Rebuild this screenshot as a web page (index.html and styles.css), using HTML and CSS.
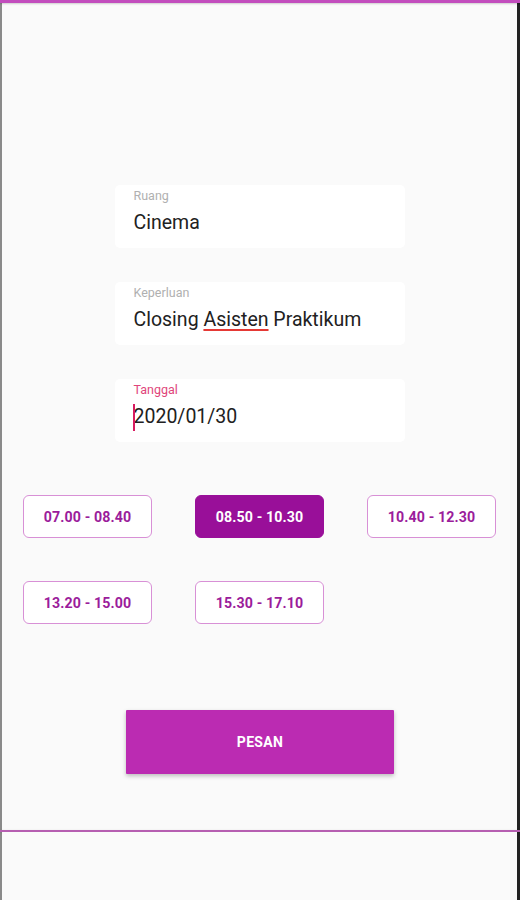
FILE: index.html
```html
<!DOCTYPE html>
<html lang="id">
<head>
<meta charset="utf-8">
<title>Pesan Ruang</title>
<link rel="stylesheet" href="styles.css">
</head>
<body>
<div class="screen">
  <div class="topbar"></div>
  <main class="content">
    <div class="fields">
      <div class="field">
        <div class="label">Ruang</div>
        <div class="value">Cinema</div>
      </div>
      <div class="field">
        <div class="label">Keperluan</div>
        <div class="value">Closing <span class="misspelled">Asisten</span> Praktikum</div>
      </div>
      <div class="field field-focused">
        <div class="label">Tanggal</div>
        <div class="value"><span class="caret"></span>2020/01/30</div>
      </div>
    </div>
    <div class="slots">
      <button class="slot">07.00 - 08.40</button>
      <button class="slot slot-active">08.50 - 10.30</button>
      <button class="slot">10.40 - 12.30</button>
      <button class="slot">13.20 - 15.00</button>
      <button class="slot">15.30 - 17.10</button>
    </div>
    <div class="action">
      <button class="submit">PESAN</button>
    </div>
  </main>
  <div class="divider"></div>
  <footer class="footer"></footer>
</div>
</body>
</html>
```

FILE: styles.css
```css
* { box-sizing: border-box; }
html, body {
  margin: 0;
  padding: 0;
  background: #fafafa;
  font-family: Roboto, "Liberation Sans", sans-serif;
}
.screen {
  width: 520px;
  height: 900px;
  display: flex;
  flex-direction: column;
  border-left: 2px solid #8a8a8a;
  border-right: 3px solid #222;
  background: #fafafa;
}
.topbar {
  height: 3px;
  margin-left: -2px;
  margin-right: -3px;
  background: #c24dbd;
  box-shadow: 0 1px 2px rgba(0,0,0,0.18);
  flex: none;
}
.content {
  height: 827px;
  flex: none;
  display: flex;
  flex-direction: column;
}
.fields {
  display: flex;
  flex-direction: column;
  align-items: center;
  gap: 34px;
  padding-top: 182px;
}
.field {
  width: 290px;
  height: 63px;
  background: #fff;
  border-radius: 5px;
  padding: 3px 19px 0;
}
.label {
  font-size: 12.5px;
  line-height: 15px;
  color: #b0b0b0;
}
.field-focused .label { color: #e0457b; }
.value {
  margin-top: 7px;
  font-size: 19.5px;
  line-height: 26px;
  color: #212121;
  position: relative;
}
.misspelled {
  text-decoration: underline solid #e53935 1.5px;
  text-underline-offset: 3px;
}
.caret {
  position: absolute;
  left: -1px;
  top: 0;
  width: 2px;
  height: 27px;
  background: #d81b60;
}
.slots {
  display: grid;
  grid-template-columns: repeat(3, 129px);
  grid-auto-rows: 43px;
  column-gap: 43px;
  row-gap: 43px;
  padding-left: 21px;
  margin-top: 53px;
}
.slot {
  font-family: Roboto, "Liberation Sans", sans-serif;
  font-weight: 700;
  font-size: 14.2px;
  letter-spacing: 0.1px;
  color: #9b1c9b;
  background: #fff;
  border: 1px solid #d890d6;
  border-radius: 6px;
  padding: 0;
  margin: 0;
}
.slot-active {
  background: #990f99;
  border-color: #990f99;
  color: #fff;
}
.action {
  display: flex;
  justify-content: center;
  margin-top: 86px;
}
.submit {
  width: 268px;
  height: 64px;
  background: #bb2bb2;
  color: #fff;
  border: none;
  border-radius: 1px;
  font-family: Roboto, "Liberation Sans", sans-serif;
  font-weight: 700;
  font-size: 14px;
  letter-spacing: 0.3px;
  box-shadow: 0 2px 4px rgba(0,0,0,0.25);
  margin-left: 1px;
}
.divider {
  height: 2px;
  margin-left: -2px;
  margin-right: -3px;
  background: #b65fb1;
  box-shadow: 0 1px 3px rgba(0,0,0,0.15);
  flex: none;
}
.footer {
  flex: 1;
  background: #fafafa;
}
```
